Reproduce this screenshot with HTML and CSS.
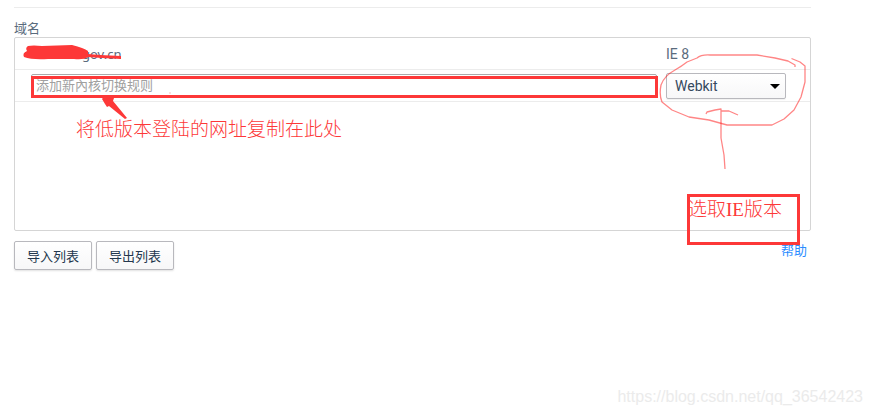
FILE: index.html
```html
<!DOCTYPE html>
<html lang="zh-CN">
<head>
    <meta charset="UTF-8">
    <meta name="viewport" content="width=device-width, initial-scale=1.0">
    <title>內核切换设置</title>
    <link rel="stylesheet" href="styles.css">
</head>
<body>

    <main class="container">
        <label class="title" for="rule">域名</label>

        <div class="list">
            <table>
                <tr>
                    <td class="domain">gov.cn</td>
                    <td class="kernel">IE 8</td>
                </tr>
                <tr>
                    <td class="new-rule"><input class="rule-input" id="rule" type="text" placeholder="添加新內核切换规则"></td>
                    <td class="kernel">
                        <div class="select-box">
                            <select aria-label="內核">
                                <option>Webkit</option>
                                <option>IE 8</option>
                            </select>
                            <svg class="caret" width="10" height="5" viewBox="0 0 10 5"><path d="M0 0H10L5 5Z" fill="#000"/></svg>
                        </div>
                    </td>
                </tr>
            </table>
        </div>

        <div class="footer">
            <div class="buttons">
                <button type="button">导入列表</button>
                <button type="button">导出列表</button>
            </div>
            <a class="help" href="#">帮助</a>
        </div>
    </main>

    <!-- hand-drawn notes over the dialog -->
    <svg class="marks" width="872" height="415" viewBox="0 0 872 415">
        <g fill="none" stroke="#fd3838" stroke-width="3">
            <rect x="32.5" y="77.5" width="624" height="19"/>
            <rect x="688.5" y="195.5" width="110" height="48"/>
        </g>
        <path d="M28 46Q33 45 42 46L72 45Q84 48 88 51V54L100 55L121 56V59L102 58L88 57Q84 60 74 59L48 59Q32 60 24 57Q22 53 27 51Q25 48 28 46Z" fill="#fd3838"/>
        <path d="M102 99L105 95L109 95L109 97L114 98L113 101L127 118L125 119L109 106L107 107L105 104Z" fill="#fd3838"/>
        <g fill="none" stroke="#f00" stroke-opacity=".48" stroke-width="1.3" stroke-linejoin="round">
            <path d="M791.5 58.5L800 62L805 66V82L801 97L794 110L784 119L772 125H727L709 120L689 117L672 110L662 102Q659 95 661 85Q664 76 675 70Q682 66 687 62L697 58Q701 54.5 710 55H757L775 58L788 61L795 65V67"/>
            <path d="M725 169L724 155L721 138V109L715 110L707 112L706 114M721 111L729 111L738 115"/>
        </g>
        <rect x="169" y="92" width="2" height="2" fill="#fcdede"/>
    </svg>
    <span class="note note-url">将低版本登陆的网址复制在此处</span>
    <span class="note note-version">选取IE版本</span>
    <span class="watermark">https://blog.csdn.net/qq_36542423</span>

</body>
</html>
```

FILE: styles.css
```css
* { box-sizing: border-box; }
body { position: relative; min-height: 100vh; margin: 0; padding: 7px 61px 0 14px; background: #fff; color: #5a6b7d; font-family: Roboto, "Noto Sans CJK SC", sans-serif; font-size: 13px; }
.container { border-top: 1px solid #ececec; padding-top: 12px; }
.title { display: block; height: 17px; line-height: 17px; }

.list { min-height: 194px; border: 1px solid #d5d5d5; border-radius: 2px; }
table { width: 100%; border-spacing: 0; table-layout: fixed; }
td { height: 32px; padding: 0; border-bottom: 1px solid #ececec; vertical-align: middle; }
.domain { padding-left: 67px; font-family: "Noto Sans", sans-serif; }
.new-rule { padding: 0 9px 0 16px; }
.kernel { width: 144px; font-size: 14px; }
.rule-input { display: block; width: 100%; height: 24px; padding: 0 4px; border: 1px solid #aaa; border-radius: 2px; background: #fff; font: inherit; }
.rule-input::placeholder { color: #a0a0a0; }
.select-box { position: relative; width: 120px; }
select { appearance: none; display: block; width: 100%; height: 26px; padding: 0 8px; border: 1px solid #b8b8bd; border-radius: 2px; background: linear-gradient(#fff, #f7f7f8); color: #34495e; font: inherit; box-shadow: 0 1px 1px rgba(0, 0, 0, 0.06); }
.caret { position: absolute; right: 6px; top: 11px; pointer-events: none; }

.footer { display: flex; justify-content: space-between; padding-top: 10px; }
.buttons { display: flex; gap: 4px; }
button { height: 29px; padding: 0 12px; border: 1px solid #b8b8bd; border-radius: 2px; background: linear-gradient(#fff, #f7f7f8); color: #23374d; font: inherit; box-shadow: 0 1px 2px rgba(0, 0, 0, 0.12); }
.help { margin-right: 4px; line-height: 20px; color: #2b8cff; text-decoration: none; }

.marks { position: absolute; left: 0; top: 0; pointer-events: none; }
.note { position: absolute; color: #fd3838; font-family: "Liberation Serif", "Noto Sans CJK SC", serif; font-size: 19px; font-weight: 300; line-height: 24px; white-space: nowrap; }
.note-url { left: 76px; top: 118px; }
.note-version { left: 688px; top: 198px; }
.watermark { position: absolute; right: 9px; bottom: 8px; color: #ebebeb; font-family: "Liberation Sans", sans-serif; font-size: 16px; line-height: 20px; }
```
